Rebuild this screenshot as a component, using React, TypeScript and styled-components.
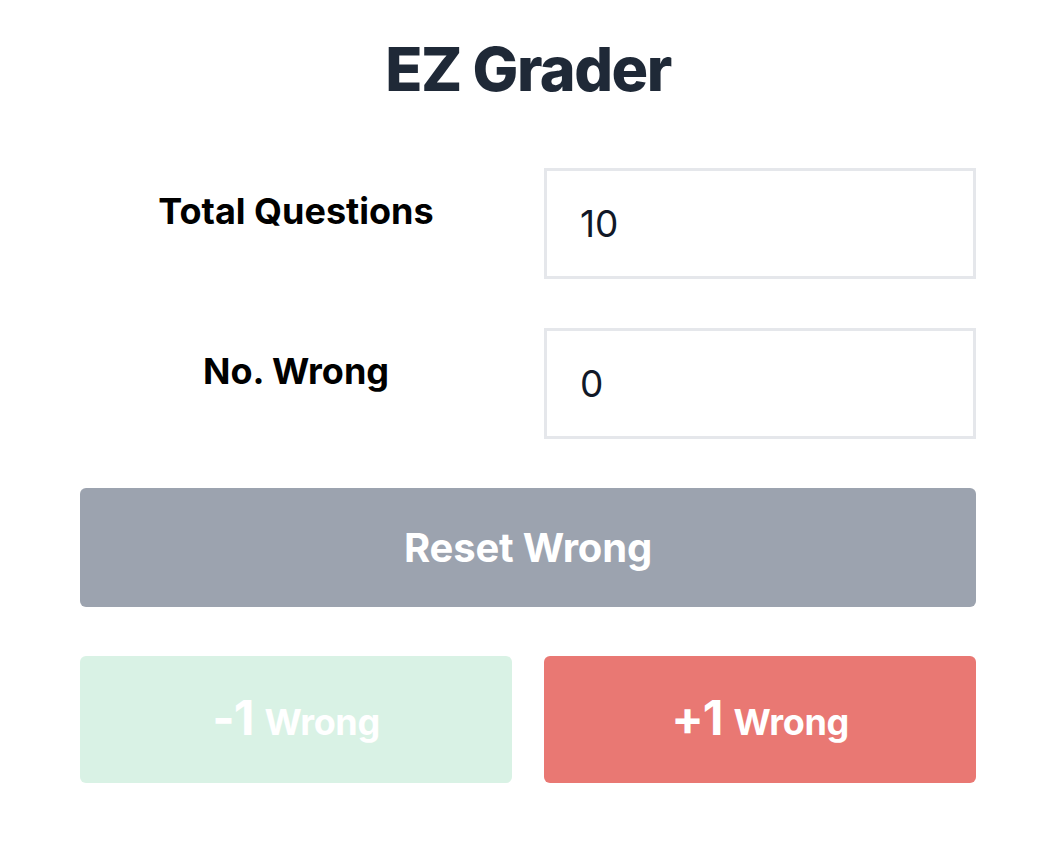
import React, { useState } from 'react';
import styled, { createGlobalStyle } from 'styled-components';

const GlobalStyle = createGlobalStyle`
	html, body {
		margin: 0;
		padding: 0;
		background: #ffffff;
	}
	body {
		font-family: Inter, 'Noto Sans', sans-serif;
	}
	* {
		box-sizing: border-box;
	}
`;

const App = () => {
	const [total, setTotal] = useState('10');
	const [wrong, setWrong] = useState(0);

	return (
		<>
			<GlobalStyle />
			<Page>
				<Title>EZ Grader</Title>
				<Row>
					<Label>Total Questions</Label>
					<Field value={total} onChange={(e) => setTotal(e.target.value)} />
				</Row>
				<Row>
					<Label>No. Wrong</Label>
					<Field value={String(wrong)} onChange={(e) => setWrong(Number(e.target.value) || 0)} />
				</Row>
				<ResetButton onClick={() => setWrong(0)}>Reset Wrong</ResetButton>
				<ButtonRow>
					<StepButton $tone='minus' onClick={() => setWrong(Math.max(0, wrong - 1))}>
						<Big>-1</Big>
						<Small>Wrong</Small>
					</StepButton>
					<StepButton $tone='plus' onClick={() => setWrong(wrong + 1)}>
						<Big>+1</Big>
						<Small>Wrong</Small>
					</StepButton>
				</ButtonRow>
			</Page>
		</>
	);
};

export default App;

const Page = styled.div`
	width: 896px;
	margin-left: 80px;
	padding-top: 30px;
	display: flex;
	flex-direction: column;
`;

const Title = styled.h1`
	margin: 0 0 60px;
	text-align: center;
	font-size: 61px;
	line-height: 78px;
	font-weight: 800;
	color: #1f2937;
	letter-spacing: -0.025em;
`;

const Row = styled.div`
	display: grid;
	grid-template-columns: 1fr 1fr;
	column-gap: 32px;
	margin-bottom: 49px;
`;

const Label = styled.label`
	text-align: center;
	font-size: 36px;
	line-height: 44px;
	font-weight: 700;
	color: #000000;
	padding-top: 21px;
`;

const Field = styled.input`
	height: 111px;
	width: 100%;
	border: 3px solid #e5e7eb;
	padding: 0 33px;
	font-family: Inter, sans-serif;
	font-size: 37px;
	color: #111827;
	outline: none;
`;

const ResetButton = styled.button`
	height: 119px;
	border: none;
	border-radius: 6px;
	background: #9ca3af;
	color: #ffffff;
	font-family: Inter, sans-serif;
	font-weight: 700;
	font-size: 40px;
	letter-spacing: -0.005em;
	margin-bottom: 49px;
	cursor: pointer;
`;

const ButtonRow = styled.div`
	display: grid;
	grid-template-columns: 1fr 1fr;
	column-gap: 32px;
`;

const StepButton = styled.button<{ $tone: 'minus' | 'plus' }>`
	height: 127px;
	border: none;
	border-radius: 6px;
	background: ${(p) => (p.$tone === 'minus' ? '#d9f2e5' : '#e97873')};
	color: #ffffff;
	font-family: Inter, sans-serif;
	font-weight: 700;
	cursor: pointer;
	display: flex;
	align-items: baseline;
	justify-content: center;
	gap: 11px;
	padding-top: 32px;
`;

const Big = styled.span`
	font-size: 48px;
	letter-spacing: -0.02em;
`;

const Small = styled.span`
	font-size: 36px;
	letter-spacing: -0.01em;
`;
